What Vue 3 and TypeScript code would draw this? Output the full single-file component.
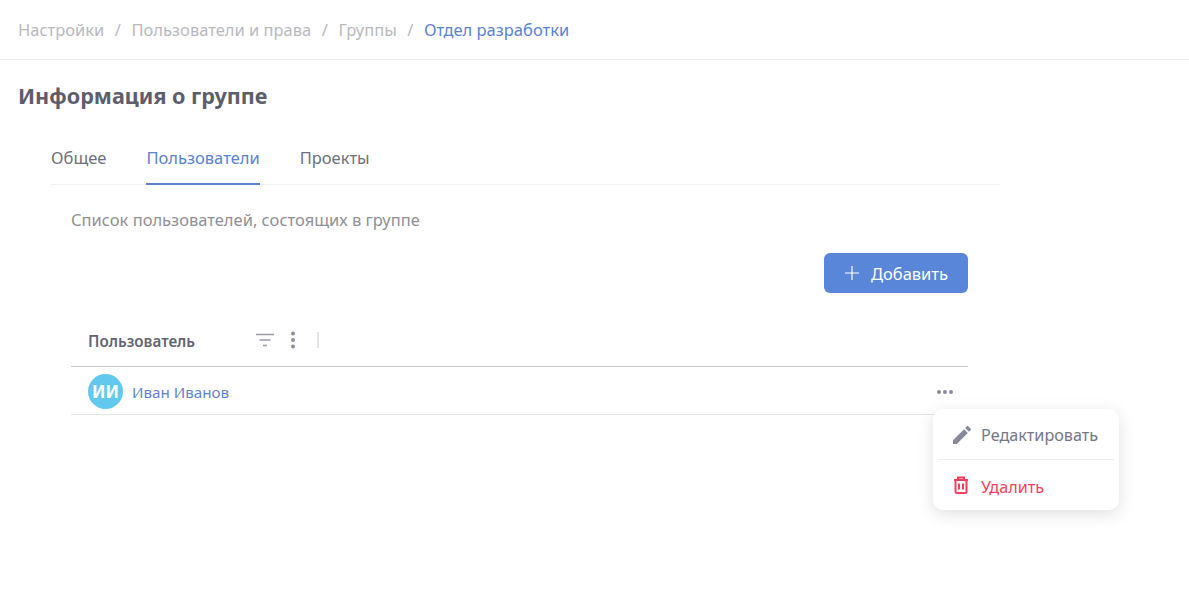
<script setup lang="ts">
const crumbs: string[] = ['Настройки', 'Пользователи и права', 'Группы']
const tabs: string[] = ['Общее', 'Пользователи', 'Проекты']
</script>

<template>
  <div class="page">
    <header class="crumbs">
      <template v-for="c in crumbs" :key="c">
        <span class="crumb">{{ c }}</span>
        <span class="sep">/</span>
      </template>
      <span class="crumb current">Отдел разработки</span>
    </header>
    <h1 class="title">Информация о группе</h1>
    <section class="content">
      <nav class="tabs">
        <span v-for="t in tabs" :key="t" class="tab" :class="{ active: t === 'Пользователи' }">{{ t }}</span>
      </nav>
      <div class="panel">
        <p class="desc">Список пользователей, состоящих в группе</p>
        <div class="actions">
          <button class="add" type="button">
            <svg width="16" height="16" viewBox="0 0 16 16"><path d="M8 1v14M1 8h14" stroke="#fff" stroke-width="1.2" fill="none" /></svg>
            <span>Добавить</span>
          </button>
        </div>
        <div class="thead">
          <span class="th">Пользователь</span>
          <svg class="filter" width="18" height="14" viewBox="0 0 18 14"><path d="M0 1.500h18M3.500 7h11M7 12.500h4" stroke="#9a9aa6" stroke-width="1.6" fill="none" /></svg>
          <svg class="kebab" width="6" height="18" viewBox="0 0 6 18"><circle cx="3" cy="2.500" r="2" fill="#8f8f9b" /><circle cx="3" cy="9" r="2" fill="#8f8f9b" /><circle cx="3" cy="15.500" r="2" fill="#8f8f9b" /></svg>
          <span class="divider"></span>
        </div>
        <div class="row">
          <span class="avatar">ИИ</span>
          <span class="name">Иван Иванов</span>
          <svg class="more" width="18" height="6" viewBox="0 0 18 6"><circle cx="3" cy="3" r="2" fill="#8a8c9e" /><circle cx="9" cy="3" r="2" fill="#8a8c9e" /><circle cx="15" cy="3" r="2" fill="#8a8c9e" /></svg>
          <div class="menu">
            <div class="item">
              <svg width="18" height="18" viewBox="0 0 18 18"><path fill="#868a9a" d="M0 14.250V18h3.750L14.810 6.940l-3.750-3.750L0 14.250zM17.710 4.040a1 1 0 0 0 0-1.410L15.370.29a1 1 0 0 0-1.410 0l-1.830 1.830 3.750 3.750 1.830-1.830z" /></svg>
              <span>Редактировать</span>
            </div>
            <div class="item danger">
              <svg width="16" height="18" viewBox="0 0 16 18"><path fill="none" stroke="#f8405e" stroke-width="2" d="M1 4h14M5 4V1.500h6V4M2.500 4v11.500a1.500 1.500 0 0 0 1.500 1.500h8a1.500 1.500 0 0 0 1.500-1.500V4M6 7.500v6M10 7.500v6" /></svg>
              <span>Удалить</span>
            </div>
          </div>
        </div>
      </div>
    </section>
  </div>
</template>

<style>
html, body { margin: 0; background: #fff; }
</style>

<style scoped>
.page {
  width: 1189px;
  height: 615px;
  overflow: hidden;
  font-family: "Noto Sans", "Open Sans", sans-serif;
  font-size: 16.5px;
  color: #6f7079;
}
.crumbs {
  display: flex;
  align-items: center;
  height: 59px;
  padding-left: 18px;
  border-bottom: 1px solid #eeeff1;
  color: #b8b9be;
}
.sep { margin: 0 10.5px; }
.current { color: #5a82cf; }
.title {
  margin: 0;
  padding: 22px 0 0 18px;
  font-size: 21.6px;
  line-height: 28px;
  font-weight: 700;
  color: #5d5e6a;
}
.content { width: 949px; margin: 22px 0 0 51px; }
.tabs {
  display: flex;
  gap: 40px;
  height: 52px;
  border-bottom: 1px solid #eeeff1;
}
.tab {
  height: 53px;
  line-height: 52px;
  box-sizing: border-box;
}
.tab.active { color: #5a82cf; border-bottom: 2px solid #5a82cf; }
.panel { padding: 0 32px 0 20px; }
.desc {
  margin: 24px 0 0;
  line-height: 22px;
  color: #909096;
}
.actions { display: flex; justify-content: flex-end; margin-top: 22px; }
.add {
  display: flex;
  align-items: center;
  justify-content: center;
  gap: 11px;
  width: 144px;
  height: 40px;
  border: 0;
  border-radius: 6px;
  background: #5a86da;
  color: #fff;
  font: inherit;
}
.thead {
  display: flex;
  align-items: center;
  height: 74px;
  padding: 23px 0 0 17px;
  border-bottom: 1px solid #c6c6cc;
  box-sizing: border-box;
}
.th { width: 168px; font-size: 15.2px; font-weight: 600; color: #65656f; }
.filter { margin-top: -2px; }
.kebab { margin: -2px 0 0 16px; }
.divider { width: 2px; height: 16px; margin: -2px 0 0 21px; background: #e4e4e8; }
.row {
  position: relative;
  display: flex;
  align-items: center;
  height: 48px;
  padding: 2px 0 0 17px;
  border-bottom: 1px solid #e4e4e7;
  box-sizing: border-box;
}
.avatar {
  display: flex;
  align-items: center;
  justify-content: center;
  width: 35px;
  height: 35px;
  border-radius: 50%;
  background: #62c8ee;
  color: #fff;
  font-size: 17px;
  font-weight: 700;
}
.name { margin-left: 9px; font-size: 15.2px; color: #5f83cf; }
.more { margin-left: auto; margin-right: 14px; }
.menu {
  position: absolute;
  top: 42px;
  left: 862px;
  width: 186px;
  height: 101px;
  padding: 0 5px;
  box-sizing: border-box;
  background: #fff;
  border-radius: 10px;
  box-shadow: 0 4px 16px rgba(60, 60, 80, 0.16);
}
.item {
  display: flex;
  align-items: center;
  gap: 10px;
  height: 51px;
  padding: 2px 0 0 15px;
  box-sizing: border-box;
  font-size: 16.2px;
  color: #757785;
}
.item:first-child { border-bottom: 1px solid #eeeff1; }
.danger { color: #f8405e; height: 50px; padding-top: 4px; }
.danger svg { margin: -4px 2px 0 0; }
</style>
